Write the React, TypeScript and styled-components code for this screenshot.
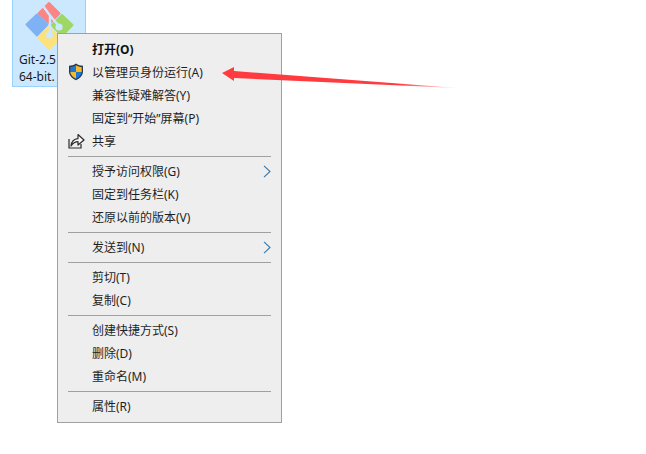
import React from "react";
import styled, { createGlobalStyle } from "styled-components";

const Global = createGlobalStyle`
  html, body { margin: 0; padding: 0; background: #fff; }
  body { font-family: "Noto Sans", "Noto Sans CJK SC", sans-serif; }
`;

const Desktop = styled.div`
  position: relative;
  width: 646px;
  height: 454px;
  overflow: hidden;
  background: #fff;
  padding-left: 12px;
  box-sizing: border-box;
`;

const FileTile = styled.div`
  width: 74px;
  height: 87px;
  box-sizing: border-box;
  background: #cce8ff;
  border: 1px solid #99d1ff;
  border-top: 0;
  display: flex;
  flex-direction: column;
  align-items: flex-start;
`;

const FileLabel = styled.div`
  font: 12px/17px "Noto Sans", "Liberation Sans", sans-serif;
  color: #1a1a1a;
  margin-left: 6px;
  margin-top: 0;
  white-space: pre;
`;

const GitIcon = styled.svg`
  width: 52px;
  height: 51px;
  margin: 0 0 0 12px;
  flex: none;
`;

const Menu = styled.div`
  position: absolute;
  left: 57px;
  top: 33px;
  width: 225px;
  height: 390px;
  box-sizing: border-box;
  background: #eeeeee;
  border: 1px solid #a0a0a0;
  padding: 4px 0;
`;

const Row = styled.div`
  position: relative;
  height: 23px;
  box-sizing: border-box;
  padding: 0 0 0 34px;
  display: flex;
  align-items: center;
  font-size: 12px;
  line-height: 21px;
  white-space: pre;
`;

const Label = styled.span<{ $bold?: boolean }>`
  font-weight: ${(p) => (p.$bold ? 700 : 400)};
  color: ${(p) => (p.$bold ? "#111" : "#1f1f1f")};
`;

const LeadIcon = styled.svg`
  position: absolute;
  left: 9px;
  top: 2px;
  width: 18px;
  height: 18px;
`;

const Chevron = styled.svg`
  position: absolute;
  right: 10px;
  top: 5px;
  width: 8px;
  height: 13px;
`;

const Separator = styled.div`
  height: 1px;
  margin: 3px 10px;
  background: #a0a0a0;
`;

const Arrow = styled.svg`
  position: absolute;
  left: 218px;
  top: 62px;
  width: 242px;
  height: 32px;
`;

const Shield = () => (
  <LeadIcon viewBox="0 0 18 18">
    <path d="M9 0.5 C11 2 13.5 2.7 16 2.7 V8.5 C16 12.6 12.8 15.4 9 17.3 C5.2 15.4 2 12.6 2 8.5 V2.7 C4.5 2.7 7 2 9 0.5 Z" fill="#2b3a48" />
    <path d="M9 2.2 C7.2 3.3 5.2 3.9 3.3 4 V9 H9 Z" fill="#1f78d0" />
    <path d="M9 2.2 C10.8 3.3 12.8 3.9 14.7 4 V9 H9 Z" fill="#f6b92a" />
    <path d="M3.3 9 H9 V15.7 C6 14.2 3.4 12 3.3 9 Z" fill="#f6b92a" />
    <path d="M14.7 9 H9 V15.7 C12 14.2 14.6 12 14.7 9 Z" fill="#1f78d0" />
  </LeadIcon>
);

const Share = () => (
  <LeadIcon viewBox="0 0 18 18">
    <path d="M2 7 V16 H14 V12" fill="none" stroke="#2b2b2b" strokeWidth="1.2" />
    <path d="M4 14 C4.5 9.8 7.4 7 11 6.7 V2.5 L17 8 L11 13 V9.6 C8.4 9.6 6 11 4 14 Z" fill="#f8f8f8" stroke="#2b2b2b" strokeWidth="1.2" strokeLinejoin="round" />
  </LeadIcon>
);

const SubmenuArrow = () => (
  <Chevron viewBox="0 0 8 13">
    <path d="M1 0.8 L7 6.5 L1 12.2" fill="none" stroke="#3a78a8" strokeWidth="1.1" />
  </Chevron>
);

type Item = { label: string; bold?: boolean; icon?: "shield" | "share"; sub?: boolean } | "sep";

const items: Item[] = [
  { label: "打开(O)", bold: true },
  { label: "以管理员身份运行(A)", icon: "shield" },
  { label: "兼容性疑难解答(Y)" },
  { label: "固定到“开始”屏幕(P)" },
  { label: "共享", icon: "share" },
  "sep",
  { label: "授予访问权限(G)", sub: true },
  { label: "固定到任务栏(K)" },
  { label: "还原以前的版本(V)" },
  "sep",
  { label: "发送到(N)", sub: true },
  "sep",
  { label: "剪切(T)" },
  { label: "复制(C)" },
  "sep",
  { label: "创建快捷方式(S)" },
  { label: "删除(D)" },
  { label: "重命名(M)" },
  "sep",
  { label: "属性(R)" },
];

export default function App() {
  return (
    <Desktop>
      <Global />
      <FileTile>
        <GitIcon viewBox="0 0 52 51">
          <g strokeLinejoin="round" strokeWidth="2">
            <path d="M24 3 L34.5 13.5 L24.5 23.5 L13.5 13.5 Z" fill="#fb8484" stroke="#fb8484" />
            <path d="M12 14.5 L1.5 24.5 L12 35.5 L22.5 24.5 Z" fill="#7fb2f4" stroke="#7fb2f4" />
            <path d="M37 15 L47.5 25 L37 36 L26.5 25 Z" fill="#9fd766" stroke="#9fd766" />
            <path d="M24 27 L13.5 37.5 L24 49 L35 37.5 Z" fill="#fde27c" stroke="#fde27c" />
          </g>
          <path d="M18 6 L25 15.5 L25 33 M25 15.5 L33 25" fill="none" stroke="#cce8ff" strokeWidth="2.4" />
          <circle cx="34" cy="27" r="3.6" fill="#cce8ff" />
          <circle cx="24.5" cy="35" r="3.4" fill="#cce8ff" />
        </GitIcon>
        <FileLabel>Git-2.5</FileLabel>
        <FileLabel>64-bit.</FileLabel>
      </FileTile>
      <Menu>
        {items.map((item, i) =>
          item === "sep" ? (
            <Separator key={i} />
          ) : (
            <Row key={i}>
              {item.icon === "shield" && <Shield />}
              {item.icon === "share" && <Share />}
              <Label $bold={item.bold}>{item.label}</Label>
              {item.sub && <SubmenuArrow />}
            </Row>
          )
        )}
      </Menu>
      <Arrow viewBox="0 0 242 32">
        <defs>
          <linearGradient id="arrowFade" x1="0" x2="1" y1="0" y2="0">
            <stop offset="0" stopColor="#ff3b3f" />
            <stop offset="0.75" stopColor="#ff3b3f" />
            <stop offset="1" stopColor="#ff3b3f" stopOpacity="0.15" />
          </linearGradient>
        </defs>
        <path d="M4 11 L16 5 L16 9 L239 26 L16 16 L16 19 Z" fill="url(#arrowFade)" />
      </Arrow>
    </Desktop>
  );
}
